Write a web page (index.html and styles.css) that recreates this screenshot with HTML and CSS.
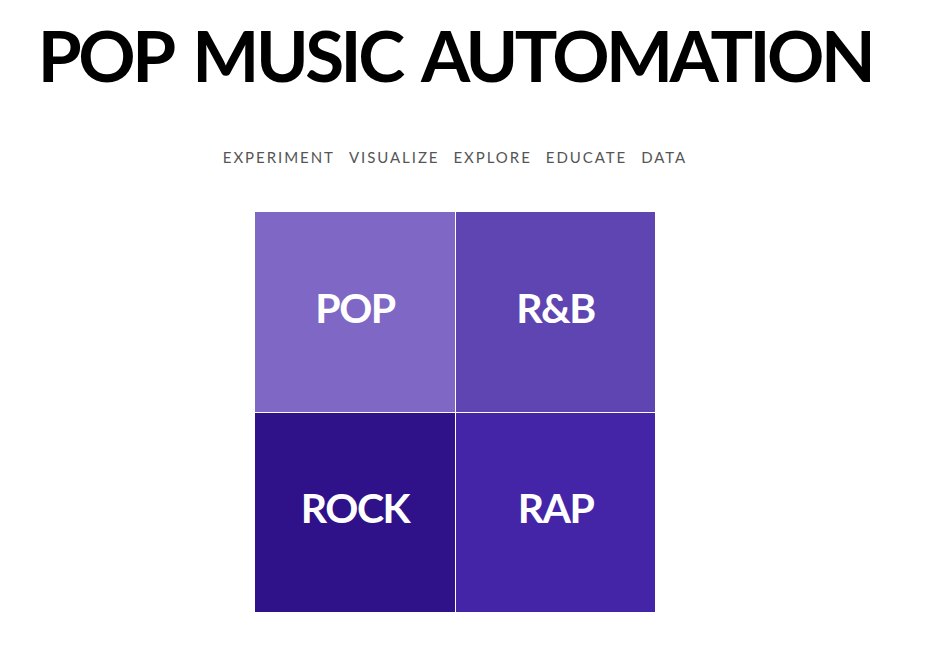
FILE: index.html
```html
<!DOCTYPE html>
<html>
<head>
<meta charset="utf-8">
<link rel="stylesheet" href="styles.css">
</head>
<body>
<div class="page">
  <h1 class="title">POP MUSIC AUTOMATION</h1>
  <nav class="nav">
    <a href="#">EXPERIMENT</a>
    <a href="#">VISUALIZE</a>
    <a href="#">EXPLORE</a>
    <a href="#">EDUCATE</a>
    <a href="#">DATA</a>
  </nav>
  <div class="grid">
    <div class="tile pop">POP</div>
    <div class="tile rnb">R&amp;B</div>
    <div class="tile rock">ROCK</div>
    <div class="tile rap">RAP</div>
  </div>
</div>
</body>
</html>
```

FILE: styles.css
```css
html, body {
  margin: 0;
  padding: 0;
  background: #ffffff;
}
body {
  font-family: Lato, "Open Sans", sans-serif;
}
.page {
  width: 910px;
  display: flex;
  flex-direction: column;
  align-items: center;
}
.title {
  margin: 11px 0 0 0;
  font-size: 71px;
  line-height: 88px;
  font-weight: 700;
  color: #000;
  letter-spacing: -3.5px;
  word-spacing: 8px;
  white-space: nowrap;
}
.nav {
  margin-top: 49px;
  display: flex;
  gap: 14px;
}
.nav a {
  font-size: 15px;
  letter-spacing: 1.95px;
  color: #555;
  text-decoration: none;
}
.grid {
  margin-top: 46px;
  display: grid;
  grid-template-columns: 200px 199px;
  grid-template-rows: 200px 199px;
  gap: 1px;
}
.tile {
  display: flex;
  align-items: center;
  justify-content: center;
  color: #fff;
  font-size: 41px;
  font-weight: 700;
  letter-spacing: -1.5px;
  padding-bottom: 10px;
  box-sizing: border-box;
}
.pop { background: #7f67c6; }
.rnb { background: #5f45b1; }
.rock { background: #2f1289; }
.rap { background: #4525a7; }
```
